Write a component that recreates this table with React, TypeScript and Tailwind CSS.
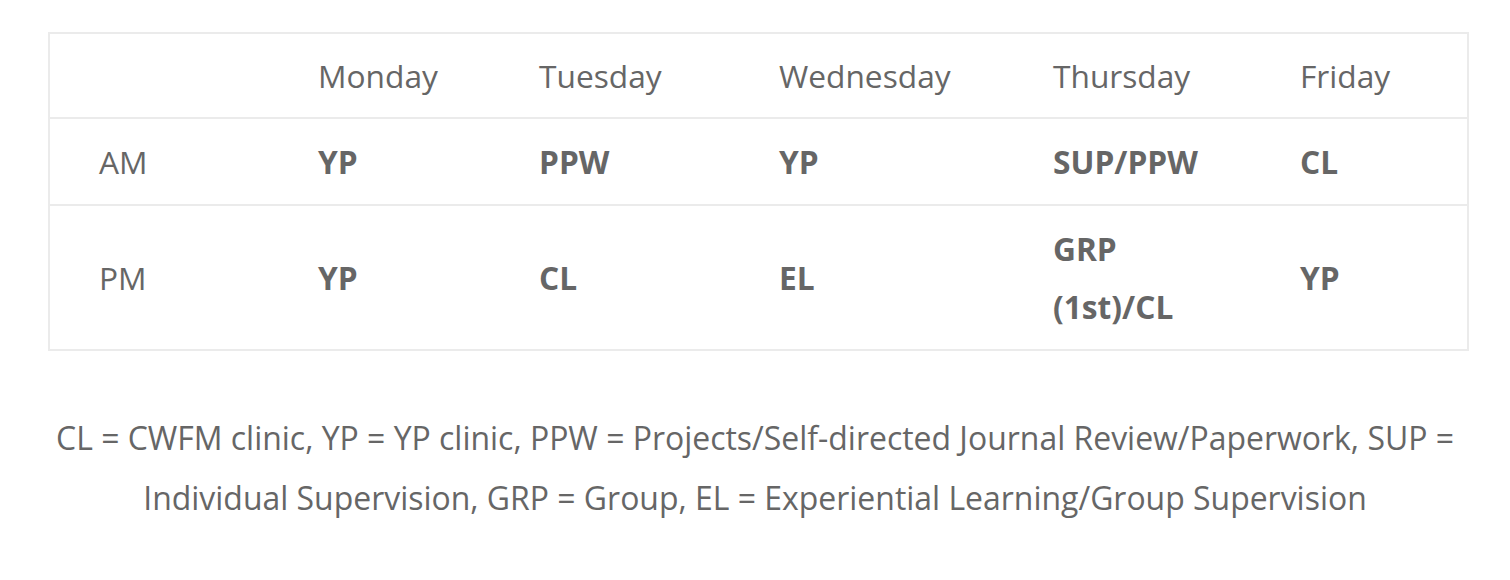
import React from "react";

const days = ["Monday", "Tuesday", "Wednesday", "Thursday", "Friday"];

const rows = [
  { label: "AM", cells: ["YP", "PPW", "YP", "SUP/PPW", "CL"] },
  { label: "PM", cells: ["YP", "CL", "EL", "GRP (1st)/CL", "YP"] },
];

const widths = ["w-[220px]", "w-[221px]", "w-[240px]", "w-[274px]", "w-[247px]", "w-[217px]"];

const App = () => {
  return (
    <div className="bg-white w-[1510px] h-[580px] pt-[32px] px-[48px] text-[#666] font-['Open_Sans',sans-serif]">
      <table className="w-[1419px] table-fixed border-collapse border-2 border-[#ebebeb] text-[31.7px] leading-[58px]">
        <thead>
          <tr>
            <th className={`${widths[0]} border-b-2 border-[#ebebeb]`}></th>
            {days.map((d, i) => (
              <th
                key={d}
                className={`${widths[i + 1]} font-normal text-left align-middle pl-[49px] py-[12.5px] border-b-2 border-[#ebebeb]`}
              >
                {d}
              </th>
            ))}
          </tr>
        </thead>
        <tbody>
          {rows.map((r) => (
            <tr key={r.label} className="border-b-2 border-[#ebebeb]">
              <td className="pl-[49px] py-[13.5px] align-middle">{r.label}</td>
              {r.cells.map((c, i) => (
                <td key={i} className="pl-[49px] pr-[50px] py-[13.5px] align-middle font-bold">
                  {c}
                </td>
              ))}
            </tr>
          ))}
        </tbody>
      </table>

      <p className="mt-[57px] text-center text-[31.95px] leading-[60px]">
        CL = CWFM clinic, YP = YP clinic, PPW = Projects/Self-directed Journal Review/Paperwork, SUP =
        Individual Supervision, GRP = Group, EL = Experiential Learning/Group Supervision
      </p>
    </div>
  );
};

export default App;
